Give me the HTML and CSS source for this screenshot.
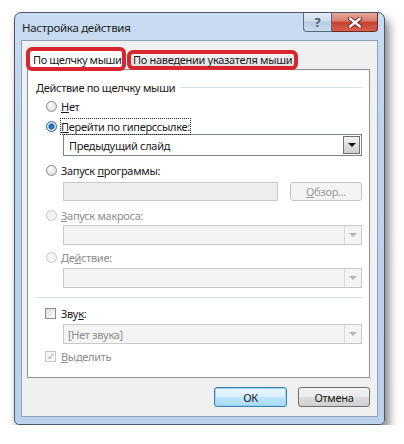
FILE: index.html
```html
<!DOCTYPE html>
<html lang="ru">
<head>
    <meta charset="UTF-8">
    <title>Настройка действия</title>
    <link rel="stylesheet" href="styles.css">
</head>
<body>
<div class="window">
    <div class="titlebar">
        <span class="title">Настройка действия</span>
        <div class="caption">
            <span class="cap-btn help">?</span>
            <span class="cap-btn close">
                <svg width="14" height="11" viewBox="0 0 14 11"><path d="M2 1.5 L12 9.5 M12 1.5 L2 9.5" stroke="#6b1d14" stroke-width="4.2" stroke-linecap="round"/><path d="M2 1.5 L12 9.5 M12 1.5 L2 9.5" stroke="#fff" stroke-width="2.4" stroke-linecap="round"/></svg>
            </span>
        </div>
    </div>

    <div class="client">
        <div class="tabs">
            <div class="tab active">По щелчку мыши</div>
            <div class="tab">По наведении указателя мыши</div>
        </div>

        <div class="panel">
            <div class="group-title"><span>Действие по щелчку мыши</span><i class="rule"></i></div>

            <div class="row r1"><span class="radio"></span><span class="label"><u>Н</u>ет</span></div>
            <div class="row r2"><span class="radio on"></span><span class="label focus"><u>П</u>ерейти по гиперссылке:</span></div>
            <div class="combo active c1"><span class="value">Предыдущий слайд</span><span class="arrow"></span></div>

            <div class="row r3"><span class="radio"></span><span class="label">Запуск <u>п</u>рограммы:</span></div>
            <div class="browse-row">
                <span class="textbox"></span>
                <span class="btn disabled"><u>О</u>бзор...</span>
            </div>

            <div class="row r4 off"><span class="radio"></span><span class="label"><u>З</u>апуск макроса:</span></div>
            <div class="combo c2"><span class="value"></span><span class="arrow"></span></div>

            <div class="row r5 off"><span class="radio"></span><span class="label">Де<u>й</u>ствие:</span></div>
            <div class="combo c3"><span class="value"></span><span class="arrow"></span></div>

            <div class="separator"></div>

            <div class="row r6"><span class="check"></span><span class="label">Зву<u>к</u>:</span></div>
            <div class="combo c4"><span class="value">[Нет звука]</span><span class="arrow"></span></div>

            <div class="row r7 off"><span class="check on">&#10003;</span><span class="label"><u>В</u>ыделить</span></div>
        </div>

        <div class="buttons">
            <span class="btn default">ОК</span>
            <span class="btn">Отмена</span>
        </div>
    </div>
</div>
</body>
</html>
```

FILE: styles.css
```css
* { box-sizing: border-box; }
body { margin: 0; background: #fff; font-family: "Noto Sans", "Open Sans", sans-serif; font-size: 11px; letter-spacing: -0.3px; color: #1a1a1a; }

.window { margin: 12px 0 0 14px; width: 371px; height: 413px; padding: 0 6px 7px 6px; border: 1px solid #4b5563; border-radius: 7px 7px 5px 5px; background: linear-gradient(#c9dcf1, #bcd3ec 30%, #b9d1ea); box-shadow: 4px 7px 10px rgba(0,0,0,0.5); display: flex; flex-direction: column; }

.titlebar { height: 27px; display: flex; align-items: flex-start; }
.title { font-size: 11.5px; color: #1e1e1e; padding: 7px 0 0 1px; }
.caption { margin-left: auto; display: flex; }
.cap-btn { height: 19px; display: flex; align-items: center; justify-content: center; border: 1px solid #5c6b80; border-top: none; }
.help { width: 29px; border-radius: 0 0 0 4px; background: linear-gradient(#e4edf7, #cdddef 45%, #b6cbe3 50%, #c8d9ec); color: #4c5866; font-size: 13px; font-weight: bold; }
.close { width: 46px; border-left: none; border-color: #6e2a22; border-radius: 0 0 4px 0; background: linear-gradient(#e8a89b, #d67d6d 45%, #c7402f 50%, #d5614d); }

.client { flex: 1; background: #f0f0f0; border: 1px solid #8ea3bb; display: flex; flex-direction: column; }

.tabs { display: flex; align-items: flex-end; margin: 6px 0 -2px 4px; position: relative; z-index: 1; }
.tab { border: 4px solid #d7262d; border-radius: 6px; white-space: nowrap; }
.tab.active { width: 100px; height: 24px; background: #fff; padding: 1px 0 0 3px; letter-spacing: -0.4px; }
.tab:not(.active) { width: 171px; height: 20px; margin: 0 0 1px 1px; background: linear-gradient(#f2f2f2, #e3e3e3); padding: 0 0 0 2px; line-height: 12px; }

.panel { margin-left: 5px; width: 343px; height: 309px; background: #fff; border: 1px solid #8c8f97; padding: 9px 7px 0 8px; }

.group-title { display: flex; align-items: center; height: 16px; }
.group-title .rule { flex: 1; height: 1px; background: #d5dfe5; margin-left: 5px; }

.row { display: flex; align-items: center; height: 16px; padding-left: 10px; }
.row .label { margin-left: 4px; }
.row.off .label { color: #8d8d8d; }
.r1 { margin-top: 3px; }
.r2 { margin-top: 4px; }
.r3 { margin-top: 6px; }
.r4 { margin-top: 6px; }
.r5 { margin-top: 4px; }
.r6 { margin-top: 7px; padding-left: 9px; }
.r7 { margin-top: 4px; padding-left: 9px; }
.r6 .label, .r7 .label { margin-left: 5px; }
.focus { outline: 1px dotted #333; outline-offset: 0; }

.radio { width: 11px; height: 11px; border-radius: 50%; border: 1px solid #8e8f8f; background: radial-gradient(circle at 40% 35%, #fff, #e1e1e1 70%, #cfcfcf); }
.radio.on { border-color: #2c628b; background: radial-gradient(circle, #2d8fdc 0, #1b5fa3 2.5px, #d8e8f6 3.5px, #e6eef6); }
.row.off .radio { border-color: #c6c6c6; background: #f4f4f4; }

.check { width: 11px; height: 11px; border: 1px solid #8e8f8f; background: linear-gradient(135deg, #dcdcdc, #fafafa); display: flex; align-items: center; justify-content: center; font-size: 10px; line-height: 1; }
.check.on { border-color: #c6c6c6; background: #f4f4f4; color: #a8a8a8; }

.combo { margin-left: 27px; width: 299px; height: 20px; border: 1px solid #c9c9c9; background: #f4f4f4; display: flex; align-items: center; color: #8d8d8d; }
.combo .value { flex: 1; padding-left: 4px; }
.combo .arrow { width: 17px; height: 18px; border-left: 1px solid #dadada; display: flex; align-items: center; justify-content: center; }
.combo .arrow::after { content: ""; border: 4px solid transparent; border-top: 4px solid #b4b4b4; border-bottom: none; }
.combo.active { height: 22px; border-color: #7d838a; background: #fff; color: #1a1a1a; }
.combo.active .value { padding-left: 5px; }
.combo.active .arrow { height: 18px; width: 17px; margin-right: 1px; border: 1px solid #707070; background: linear-gradient(#f2f2f2, #dedede 50%, #cfcfcf); }
.combo.active .arrow::after { border-top-color: #111; }
.c2 { margin-top: 2px; }
.c3 { margin-top: 3px; }
.c4 { margin-top: 3px; }

.browse-row { display: flex; margin: 4px 0 0 27px; width: 299px; justify-content: space-between; }
.textbox { width: 215px; height: 19px; border: 1px solid #c9c9c9; background: #eeeeee; }

.btn { height: 20px; display: flex; align-items: center; justify-content: center; border: 1px solid #707070; border-radius: 3px; background: linear-gradient(#f3f3f3, #ebebeb 50%, #dddddd 51%, #cfcfcf); }
.btn.disabled { width: 72px; height: 19px; border-color: #c4c4c4; background: #f4f4f4; color: #9a9a9a; }
.buttons { display: flex; justify-content: flex-end; gap: 11px; margin-top: 9px; padding-right: 7px; }
.buttons .btn { width: 72px; }
.btn.default { width: 73px; border-color: #3c7fb1; box-shadow: inset 0 0 0 1px #9bd5f5; background: linear-gradient(#eaf6fd, #d9f0fc 50%, #bee6fd 51%, #a7d9f5); }

.separator { height: 1px; margin: 9px 0 0 0; background: #d5dfe5; }
```
